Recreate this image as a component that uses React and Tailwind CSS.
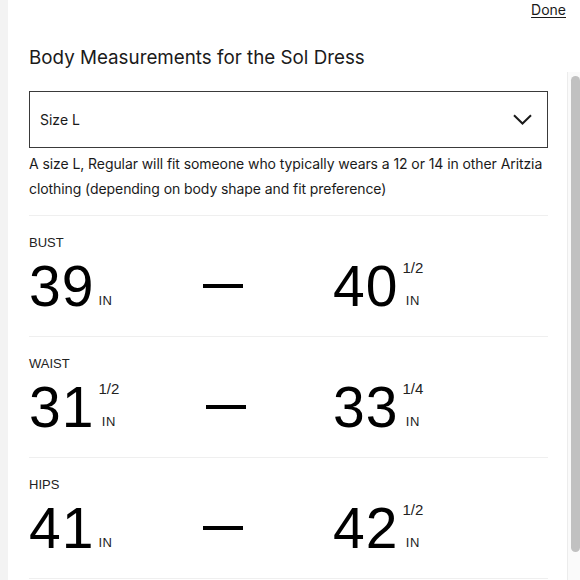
import React from "react";

const ROWS = [
  { label: "BUST", from: { n: "39" }, to: { n: "40", frac: "1/2" } },
  { label: "WAIST", from: { n: "31", frac: "1/2" }, to: { n: "33", frac: "1/4" } },
  { label: "HIPS", from: { n: "41" }, to: { n: "42", frac: "1/2" } },
];

// Big number with an optional fraction on top and "IN" on the baseline
const Value = ({ n, frac }) => (
  <div className="flex h-[56px]">
    <span className="text-[57px] leading-[56px] tracking-[1px] text-black">{n}</span>
    <div className="ml-[4px] flex h-[56px] flex-col items-center">
      <span className="mt-[2px] h-[15px] text-[15px] leading-[15px] text-[#222]">
        {frac || ""}
      </span>
      <span className="mt-auto mb-[7px] text-[13px] leading-[13px] tracking-[0.5px] text-[#222]">
        IN
      </span>
    </div>
  </div>
);

const Row = ({ row }) => (
  <div className="border-t border-[#efefef] pt-[19px] pb-[22px] font-['Liberation_Sans',Arial,sans-serif]">
    <div className="h-4 text-[13px] leading-4 text-[#222]">{row.label}</div>
    <div className="mt-[7px] flex">
      <Value {...row.from} />
      <div className="flex flex-1 items-center justify-center">
        <div className="h-[4px] w-[40px] bg-black" />
      </div>
      <div className="w-[215px]">
        <Value {...row.to} />
      </div>
    </div>
  </div>
);

export default function App() {
  return (
    <div className="flex h-[580px] w-[580px] overflow-hidden bg-white font-['Inter',sans-serif] text-[#1a1a1a]">
      <div className="w-[8px] shrink-0 bg-[#f3f3f3]" />
      <div className="flex min-w-0 flex-1 flex-col">
        {/* header */}
        <div className="flex h-[20px] justify-end pr-[14px]">
          <span className="text-[14px] leading-5 underline underline-offset-2">Done</span>
        </div>
        <div className="mt-[26px] h-[24px] pl-[21px] text-[18.8px] leading-6">
          Body Measurements for the Sol Dress
        </div>
        <div className="mt-[2px] flex flex-1 overflow-hidden">
          <div className="min-w-0 flex-1 pl-[21px] pr-[19px]">
            <div className="mt-[19px] flex h-[57px] items-center justify-between border-[1.5px] border-[#3a3a3a] pl-[10px] pr-[15px]">
              <span className="text-[14px]">Size L</span>
              <svg width="19" height="11" viewBox="0 0 19 11" fill="none">
                <path d="M1 1.2 L9.5 9.5 L18 1.2" stroke="#1a1a1a" strokeWidth="2" />
              </svg>
            </div>
            <p className="mt-[3px] text-[14px] leading-[25px] tracking-[-0.08px]">
              A size L, Regular will fit someone who typically wears a 12 or 14 in other Aritzia
              clothing (depending on body shape and fit preference)
            </p>
            <div className="mt-[14px]">
              {ROWS.map((row) => (
                <Row key={row.label} row={row} />
              ))}
              <div className="border-t border-[#efefef]" />
            </div>
          </div>
          {/* scrollbar */}
          <div className="w-[13px] shrink-0 border-l border-[#ececec] bg-[#fafafa] pt-[4px] pl-[3px]">
            <div className="h-[476px] w-[9px] rounded-full bg-[#c1c1c1]" />
          </div>
        </div>
      </div>
    </div>
  );
}
